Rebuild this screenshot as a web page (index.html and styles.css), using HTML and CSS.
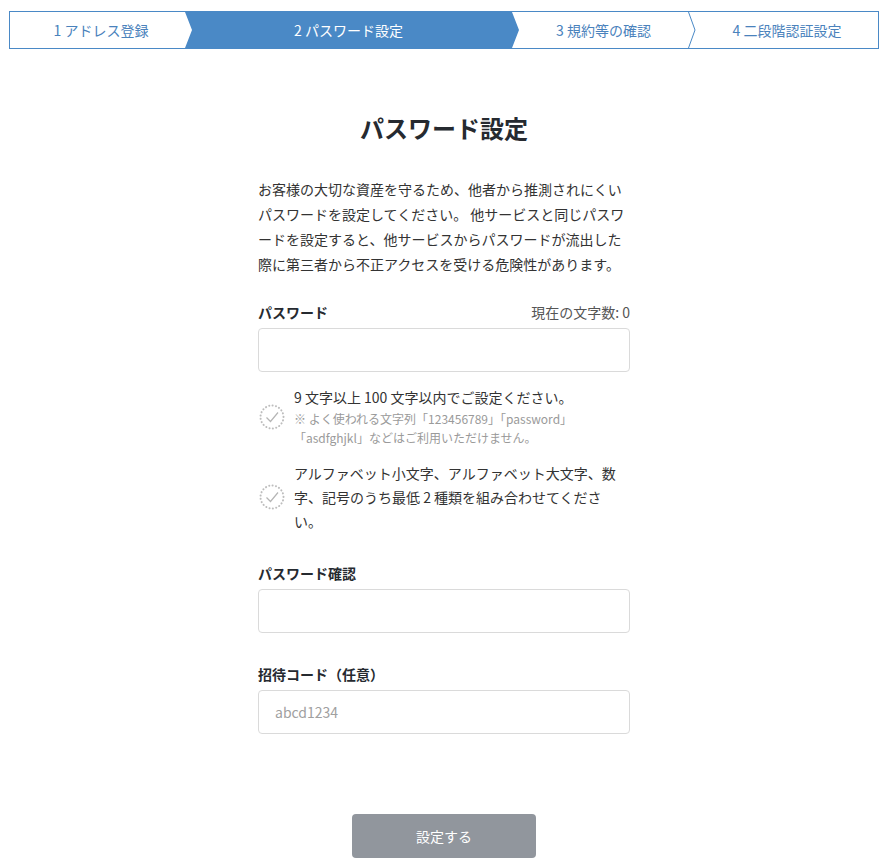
FILE: index.html
```html
<!DOCTYPE html>
<html lang="ja">
<head>
    <meta charset="UTF-8">
    <meta name="viewport" content="width=device-width, initial-scale=1.0">
    <title>パスワード設定</title>
    <link rel="stylesheet" href="styles.css">
</head>
<body>
    <ol class="steps">
        <li class="step step-first">1 アドレス登録</li>
        <li class="step step-current">2 パスワード設定</li>
        <li class="step step-next">3 規約等の確認</li>
        <li class="step-sep">
            <svg width="8" height="36" viewBox="0 0 8 36"><path d="M0.5 0 L7 18 L0.5 36" fill="none" stroke="#4a89c6" stroke-width="1"/></svg>
        </li>
        <li class="step step-last">4 二段階認証設定</li>
    </ol>

    <main class="container">
        <h1>パスワード設定</h1>
        <p class="lead">お客様の大切な資産を守るため、他者から推測されにくいパスワードを設定してください。 他サービスと同じパスワードを設定すると、他サービスからパスワードが流出した際に第三者から不正アクセスを受ける危険性があります。</p>

        <div class="field">
            <div class="field-head">
                <label class="label" for="password">パスワード</label>
                <span class="counter">現在の文字数: 0</span>
            </div>
            <input class="input" id="password" type="password">
        </div>

        <ul class="rules">
            <li class="rule">
                <svg class="rule-icon" width="26" height="26" viewBox="0 0 26 26"><circle cx="13" cy="13" r="11.5" fill="none" stroke="#bdbdbd" stroke-width="2" stroke-dasharray="0.1 3.3" stroke-linecap="round"/><path d="M7.5 13.5 L11.5 17.5 L19 8.5" fill="none" stroke="#b5b5b5" stroke-width="1.2"/></svg>
                <div class="rule-text">
                    <div>9 文字以上 100 文字以内でご設定ください。</div>
                    <div class="rule-note">※ よく使われる文字列「123456789」「password」「asdfghjkl」などはご利用いただけません。</div>
                </div>
            </li>
            <li class="rule rule-wide">
                <svg class="rule-icon" width="26" height="26" viewBox="0 0 26 26"><circle cx="13" cy="13" r="11.5" fill="none" stroke="#bdbdbd" stroke-width="2" stroke-dasharray="0.1 3.3" stroke-linecap="round"/><path d="M7.5 13.5 L11.5 17.5 L19 8.5" fill="none" stroke="#b5b5b5" stroke-width="1.2"/></svg>
                <div class="rule-text">アルファベット小文字、アルファベット大文字、数字、記号のうち最低 2 種類を組み合わせてください。</div>
            </li>
        </ul>

        <div class="field field-confirm">
            <label class="label" for="password-confirm">パスワード確認</label>
            <input class="input" id="password-confirm" type="password">
        </div>

        <div class="field field-invite">
            <label class="label" for="invite">招待コード（任意）</label>
            <input class="input" id="invite" type="text" placeholder="abcd1234">
        </div>

        <div class="actions">
            <button class="submit-button" disabled>設定する</button>
        </div>
    </main>
</body>
</html>
```

FILE: styles.css
```css
* {
    box-sizing: border-box;
}
body {
    margin: 0;
    font-family: "Noto Sans CJK JP", "Noto Sans", sans-serif;
    color: #333;
    background-color: #ffffff;
    font-size: 14px;
}
.steps {
    display: flex;
    list-style: none;
    margin: 11px 9px 0 9px;
    padding: 0;
    height: 38px;
    border: 1px solid #4a89c6;
    background-color: #ffffff;
}
.step {
    display: flex;
    align-items: center;
    justify-content: center;
    font-size: 14px;
    color: #4a82bc;
    white-space: nowrap;
}
.step-first {
    width: 175px;
    padding-left: 7px;
}
.step-current {
    position: relative;
    z-index: 1;
    width: 334px;
    padding-right: 7px;
    background-color: #4a89c6;
    color: #ffffff;
    clip-path: polygon(0 0, calc(100% - 7px) 0, 100% 50%, calc(100% - 7px) 100%, 0 100%, 7px 50%);
}
.step-next {
    width: 176px;
    margin-left: -7px;
    padding-left: 7px;
}
.step-sep {
    width: 8px;
    display: flex;
}
.step-last {
    flex: 1;
}
.container {
    width: 372px;
    margin: 0 auto;
    padding-bottom: 4px;
}
h1 {
    margin: 62px 0 0 0;
    font-size: 24px;
    line-height: 34px;
    font-weight: bold;
    text-align: center;
    color: #262a30;
}
.lead {
    margin: 32px 0 0 0;
    line-height: 25px;
    color: #333;
}
.field {
    margin-top: 25px;
}
.field-head {
    display: flex;
    justify-content: space-between;
    align-items: center;
}
.label {
    display: block;
    font-weight: bold;
    line-height: 20px;
    color: #262a30;
}
.counter {
    line-height: 20px;
    color: #555;
}
.input {
    display: block;
    width: 100%;
    height: 44px;
    margin-top: 6px;
    padding: 0 16px;
    border: 1px solid #dadada;
    border-radius: 4px;
    font-family: inherit;
    font-size: 14px;
    color: #333;
    background-color: #ffffff;
}
.input::placeholder {
    color: #a0a0a0;
}
.rules {
    list-style: none;
    margin: 15px 0 0 0;
    padding: 0;
}
.rule {
    display: flex;
    align-items: center;
    gap: 9px;
    padding-left: 1px;
}
.rule + .rule {
    margin-top: 14px;
}
.rule-icon {
    flex: none;
}
.rule-text {
    width: 330px;
    line-height: 21px;
    color: #333;
}
.rule-wide .rule-text {
    line-height: 24px;
}
.rule-note {
    margin-top: 1px;
    font-size: 12px;
    line-height: 19px;
    color: #9a9a9a;
}
.field-confirm {
    margin-top: 30px;
}
.field-invite {
    margin-top: 31px;
}
.actions {
    display: flex;
    justify-content: center;
    margin-top: 80px;
}
.submit-button {
    width: 184px;
    height: 44px;
    border: none;
    border-radius: 4px;
    background-color: #91969d;
    color: #ffffff;
    font-family: inherit;
    font-size: 14px;
}
```
